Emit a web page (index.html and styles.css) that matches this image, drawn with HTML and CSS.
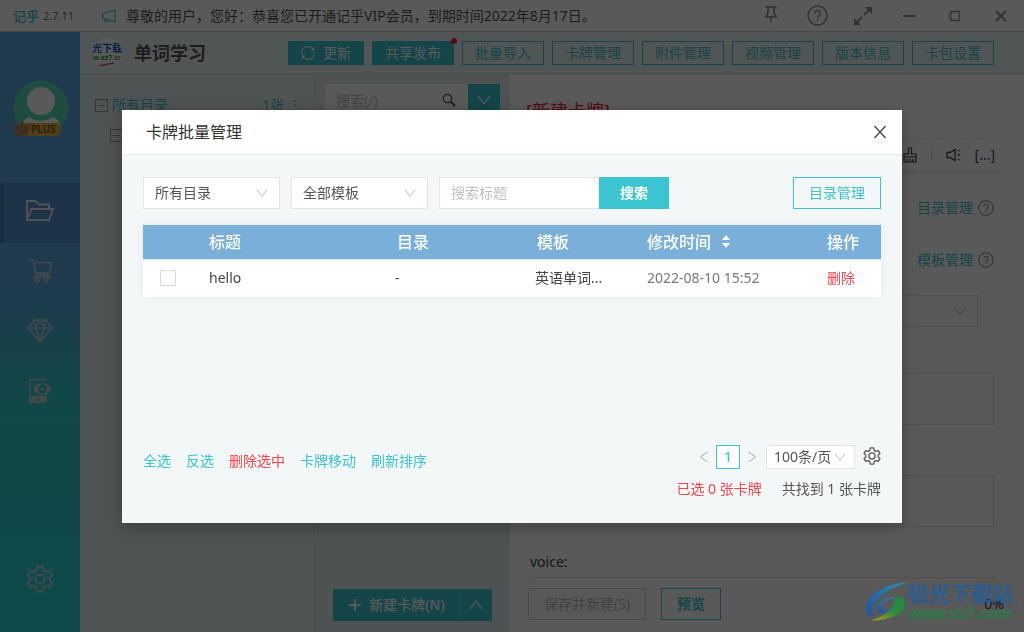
FILE: index.html
```html
<!DOCTYPE html>
<html lang="zh-CN">
<head>
<meta charset="utf-8">
<meta name="viewport" content="width=device-width, initial-scale=1">
<title>记乎</title>
<link rel="stylesheet" href="styles.css">
</head>
<body>
<svg class="defs" aria-hidden="true">
  <symbol id="chevron" viewBox="0 0 12 12"><path d="M1 2.5 6 9.5 11 2.5" fill="none" stroke="currentColor"/></symbol>
  <symbol id="help" viewBox="0 0 20 20"><g fill="none" stroke="currentColor" stroke-width="1.3"><circle cx="10" cy="10" r="9"/><path d="M7.3 8a2.7 2.7 0 1 1 4.4 2.1c-1 .8-1.7 1.100-1.700 2.400"/></g><circle cx="10" cy="14.600" r=".9" fill="currentColor"/></symbol>
  <symbol id="gear" viewBox="0 0 28 28"><g fill="none" stroke="currentColor" stroke-width="2" stroke-linejoin="round"><path d="M11.500 1.500h5l.9 3.700 2.700 1.600 3.700-1.100 2.500 4.300-2.700 2.700v2.600l2.700 2.700-2.500 4.300-3.700-1.100-2.700 1.600-.9 3.700h-5l-.9-3.700-2.700-1.600-3.700 1.100-2.500-4.300 2.700-2.700v-2.600l-2.700-2.700 2.500-4.300 3.700 1.100 2.700-1.600z"/><circle cx="14" cy="14" r="4.800"/></g></symbol>
</svg>

<div class="app">
  <header class="titlebar">
    <span class="brand">记乎</span>
    <span class="version">2.7.11</span>
    <svg class="horn" viewBox="0 0 16 14"><path d="M1.500 5 14 1v12L1.500 9zM4 9.500v3h3v-2" fill="none" stroke="currentColor" stroke-width="1.200"/></svg>
    <p class="notice">尊敬的用户，您好：恭喜您已开通记乎VIP会员，到期时间2022年8月17日。</p>
    <div class="window-tools">
      <button aria-label="置顶"><svg width="14" height="20" viewBox="0 0 14 20"><path d="M1.500 1h11M4 1v6L2 10.500M10 1v6l2 3.500M1 11h12" fill="none" stroke="currentColor" stroke-width="1.600"/><path d="M6 12h2l-1 7z" fill="currentColor"/></svg></button>
      <button aria-label="帮助"><svg width="21" height="21"><use href="#help"/></svg></button>
      <button aria-label="全屏"><svg width="20" height="20" viewBox="0 0 20 20"><path d="m11 9 6-6M9 11l-6 6" stroke="currentColor" stroke-width="2"/><path d="M12 1h7v7zM1 12v7h7z" fill="currentColor"/></svg></button>
      <button aria-label="最小化"><svg width="14" height="14"><path d="M1 7h12" stroke="currentColor" stroke-width="2"/></svg></button>
      <button aria-label="最大化"><svg width="12" height="12"><rect x="1.500" y="1.500" width="9" height="9" rx="1" fill="none" stroke="currentColor" stroke-width="1.500"/></svg></button>
      <button aria-label="关闭"><svg width="12" height="12"><path d="m1 1 10 10M11 1 1 11" stroke="currentColor" stroke-width="1.800"/></svg></button>
    </div>
  </header>

  <nav class="sidebar">
    <svg class="avatar" viewBox="0 0 56 58">
      <defs><clipPath id="face"><circle cx="29" cy="28" r="27.500"/></clipPath></defs>
      <circle cx="29" cy="28" r="27.500" fill="#58ddb7"/>
      <g clip-path="url(#face)" fill="#fff"><circle cx="29" cy="21" r="14"/><path d="M9 46c2-5 5-8 8-9 7 5 17 5 24 0 3 1 6 4 8 9v10H9z"/></g>
      <path d="M12 43h32a5 5 0 0 1 5 5v2a6 6 0 0 1-6 6H8z" fill="#e2b447"/>
      <path d="M1 43l5 3 4-5 4 5 4-3-2 12-11 1z" fill="#b5854f"/>
      <text class="plus" x="19" y="53">PLUS</text>
    </svg>
    <a class="nav-item active" href="#" aria-label="卡包"><svg width="30" height="24" viewBox="0 0 30 24"><path d="M2 21V2h8l4 3.500h10V10M2 21l4.500-11H28l-4 11z" fill="none" stroke="currentColor" stroke-width="1.800"/></svg></a>
    <a class="nav-item" href="#" aria-label="商店"><svg width="26" height="24" viewBox="0 0 26 24"><g fill="none" stroke="currentColor" stroke-width="1.500"><path d="M1 1.500h5L9 16h14M7 3.500h17.500L22.500 14H9M9 16l-2 2h18"/><circle cx="10" cy="21" r="2"/><circle cx="19" cy="21" r="2"/></g></svg></a>
    <a class="nav-item" href="#" aria-label="会员"><svg width="26" height="24" viewBox="0 0 26 24"><path d="M7 1h12l6 8-12 14L1 9zM1 9h24M7 1l2 8 4 14 4-14 2-8M8 8l5-6 5 6" fill="none" stroke="currentColor" stroke-width="1.500"/></svg></a>
    <a class="nav-item" href="#" aria-label="浏览"><svg width="24" height="26" viewBox="0 0 24 26"><path d="M18 1.500H3.500A1.500 1.500 0 0 0 2 3v17" fill="none" stroke="currentColor" stroke-width="1.500"/><path fill-rule="evenodd" fill="currentColor" d="M1 18h18v5a2 2 0 0 1-2 2H3a2 2 0 0 1-2-2zm9 2a1.500 1.500 0 1 0 0 3 1.500 1.500 0 0 0 0-3zM5 11c5-8 14-8 19 0-5 8-14 8-19 0zm9.500-4.500a4.500 4.500 0 1 0 0 9 4.500 4.500 0 0 0 0-9z"/><circle cx="14.500" cy="11" r="1.800" fill="currentColor"/></svg></a>
    <a class="nav-item settings" href="#" aria-label="设置"><svg width="28" height="28"><use href="#gear"/></svg></a>
  </nav>

  <div class="deck-bar">
    <div class="deck-logo"><b>光下载</b><i>w.xz7.cr</i><svg width="20" height="5"><path d="M1 4 17 1" stroke="#d3479b" stroke-width="1.500"/></svg></div>
    <h1>单词学习</h1>
    <div class="deck-actions">
      <button class="btn fill refresh"><svg width="14" height="14" viewBox="0 0 14 14"><path d="M1 8a6 6 0 0 1 11-4.500M13 6A6 6 0 0 1 2 10.500M12.500 1v3H10M1.500 13v-3H4" fill="none" stroke="currentColor" stroke-width="1.100"/></svg>更新</button>
      <button class="btn fill dot">共享发布</button>
      <button class="btn">批量导入</button>
      <button class="btn">卡牌管理</button>
      <button class="btn">附件管理</button>
      <button class="btn">视频管理</button>
      <button class="btn">版本信息</button>
      <button class="btn">卡包设置</button>
    </div>
  </div>

  <aside class="tree">
    <div class="tree-row"><span class="fold"></span><a href="#">所有目录</a><span class="count">1张 ⋮</span></div>
    <div class="tree-row child"><span class="fold"></span></div>
  </aside>

  <section class="cards">
    <div class="card-search">
      <input type="text" placeholder="搜索(/)" aria-label="搜索卡牌">
      <svg class="lens" viewBox="0 0 14 14"><path d="M9 9l4 4" stroke="currentColor" stroke-width="2"/><circle cx="5.500" cy="5.500" r="4.200" fill="none" stroke="currentColor" stroke-width="1.300"/></svg>
      <button class="square" aria-label="筛选"><svg width="14" height="14"><use href="#chevron"/></svg></button>
    </div>
    <div class="new-card">
      <button class="new-main"><svg width="12" height="12"><path d="M6 0v12M0 6h12" stroke="currentColor" stroke-width="2"/></svg>新建卡牌(N)</button>
      <button class="square" aria-label="更多"><svg class="up" width="14" height="14"><use href="#chevron"/></svg></button>
    </div>
  </section>

  <main class="editor">
    <div class="form">
      <h2>[新建卡牌]</h2>
      <div class="format-bar">
        <svg width="14" height="16" viewBox="0 0 14 16"><path d="M5.500 7V1h3v6H13v8H1V7zM1 10h12M4 15v-3M7 15v-3M10 15v-3" fill="none" stroke="currentColor" stroke-width="1.200"/></svg>
        <span class="divider"></span>
        <svg width="15" height="14" viewBox="0 0 15 14"><path d="M1 4.500h3L9 1.500v11L4 9.500H1zM11.500 3l2-1M11.500 7H14M11.500 11l2 1" fill="none" stroke="currentColor" stroke-width="1.300"/></svg>
        <span>[...]</span>
      </div>
      <div class="form-link"><a href="#">目录管理</a><svg width="16" height="16"><use href="#help"/></svg></div>
      <div class="form-link"><a href="#">模板管理</a><svg width="16" height="16"><use href="#help"/></svg></div>
      <div class="select template"><select aria-label="模板"><option></option></select><svg><use href="#chevron"/></svg></div>
      <textarea aria-label="正面"></textarea>
      <textarea aria-label="背面"></textarea>
      <label for="voice">voice:</label>
      <input id="voice" type="text">
    </div>
    <div class="form-actions">
      <button class="btn big" disabled>保存并新建(S)</button>
      <button class="btn big preview">预览</button>
      <span class="progress">0%</span>
    </div>
  </main>
</div>

<div class="mask">
  <div class="dialog" role="dialog" aria-modal="true" aria-labelledby="dialog-title">
    <header class="dialog-head">
      <h2 id="dialog-title">卡牌批量管理</h2>
      <button aria-label="关闭"><svg width="14" height="14"><path d="m1.500 1 11 12M12.500 1l-11 12" stroke="currentColor" stroke-width="1.300"/></svg></button>
    </header>
    <div class="dialog-body">
      <div class="filters">
        <div class="select"><select aria-label="目录"><option>所有目录</option></select><svg><use href="#chevron"/></svg></div>
        <div class="select"><select aria-label="模板"><option>全部模板</option></select><svg><use href="#chevron"/></svg></div>
        <div class="find"><input type="text" placeholder="搜索标题" aria-label="搜索标题"><button>搜索</button></div>
        <button class="btn big manage">目录管理</button>
      </div>
      <div class="table-area">
        <table>
          <colgroup><col class="c-check"><col><col class="c-dir"><col class="c-tpl"><col class="c-time"><col class="c-op"></colgroup>
          <thead><tr><th></th><th>标题</th><th>目录</th><th>模板</th><th>修改时间<svg class="sort" viewBox="0 0 8 13"><path d="M4 0l4 5H0zM4 13l4-5H0z" fill="currentColor"/></svg></th><th>操作</th></tr></thead>
          <tbody><tr><td><input type="checkbox" aria-label="选择 hello"></td><td>hello</td><td>-</td><td>英语单词...</td><td class="time">2022-08-10 15:52</td><td><a class="danger" href="#">删除</a></td></tr></tbody>
        </table>
      </div>
      <footer class="dialog-foot">
        <div class="bulk"><a href="#">全选</a><a href="#">反选</a><a class="danger" href="#">删除选中</a><a href="#">卡牌移动</a><a href="#">刷新排序</a></div>
        <div class="paging">
          <div class="pager">
            <button class="arrow" aria-label="上一页"><svg class="prev" width="12" height="12"><use href="#chevron"/></svg></button>
            <button class="page">1</button>
            <button class="arrow" aria-label="下一页"><svg class="next" width="12" height="12"><use href="#chevron"/></svg></button>
            <div class="select small"><select aria-label="每页条数"><option>100条/页</option></select><svg><use href="#chevron"/></svg></div>
            <button class="cog" aria-label="表格设置"><svg width="18" height="18"><use href="#gear"/></svg></button>
          </div>
          <p class="totals"><span class="danger">已选 0 张卡牌</span><span>共找到 1 张卡牌</span></p>
        </div>
      </footer>
    </div>
  </div>
</div>

<div class="watermark">
  <svg viewBox="0 0 44 42">
    <defs>
      <linearGradient id="wb" x1="1" y1="0" x2="0" y2="1"><stop offset="0" stop-color="#2c91b5"/><stop offset="1" stop-color="#24509a"/></linearGradient>
      <linearGradient id="wg" x1="1" y1="0" x2="0" y2="1"><stop offset="0" stop-color="#198746"/><stop offset=".5" stop-color="#318c3c"/><stop offset="1" stop-color="#b3a321"/></linearGradient>
    </defs>
    <path d="M44 1C25 1 0 13 1 28c0 6 4 8 8 8-6-10 5-26 35-35z" fill="url(#wb)"/>
    <path d="M34 17c-12-3-24 6-21 13 3 5 14 1 16-6-5 6-12 7-12 2 0-5 8-9 17-9z" fill="url(#wb)"/>
    <path d="M29 16c8-1 14 3 12 9-3 9-17 15-36 15 13-3 24-11 25-18 1-3 0-5-1-6z" fill="url(#wg)"/>
  </svg>
  <div><strong>极光下载站</strong><span>www.xz7.com</span></div>
</div>
</body>
</html>
```

FILE: styles.css
```css
* { box-sizing: border-box; }
body {
  margin: 0;
  font: 14px/20px "Noto Sans", "Noto Sans CJK SC", sans-serif;
  color: #444;
}
h1, h2, p { margin: 0; }
a { color: #3bc5d1; text-decoration: none; }
svg { flex: none; }
button, input, select, textarea { font: inherit; color: inherit; margin: 0; border-radius: 0; }
button { display: flex; align-items: center; justify-content: center; padding: 0; border: 0; background: none; }
.defs { position: absolute; width: 0; height: 0; }

.app {
  display: grid;
  grid-template: 32px 42px 1fr / 80px 235px 195px 1fr;
  height: 100vh;
  overflow: hidden;
  background: #fff;
}
.titlebar {
  grid-column: 1 / -1;
  display: flex;
  align-items: center;
  padding-left: 13px;
  border-bottom: 1px solid #d0d4d4;
}
.brand { font-size: 13px; font-weight: 500; color: #3bc5d1; }
.version { margin-left: 4px; font-size: 11px; color: #777; width: 44px; }
.horn { width: 16px; height: 14px; margin: 0 9px 0 14px; color: #3bc5d1; }
.notice { white-space: nowrap; color: #555; }
.window-tools { display: flex; margin-left: auto; color: #8c8c8c; }
.window-tools button { width: 46px; height: 30px; }

.sidebar {
  grid-row: 2 / 4;
  display: flex;
  flex-direction: column;
  align-items: center;
  padding: 48px 0 21px;
  background: linear-gradient(#5ba7df 0, #5aa5dc 250px, #31cccc 365px, #2dd2d4 100%);
}
.avatar { width: 56px; height: 58px; margin-bottom: 45px; overflow: visible; }
.plus { font: bold 10px "Noto Sans", sans-serif; fill: #8a5a2b; }
.nav-item {
  display: flex;
  align-items: center;
  justify-content: center;
  width: 100%;
  height: 60px;
  padding-bottom: 5px;
  color: #c0cdd0;
}
.nav-item.active { background: #5593d0; border-left: 4px solid #4580ac; padding-right: 4px; color: #eee; }
.settings { margin-top: auto; }

.deck-bar {
  grid-column: 2 / -1;
  display: flex;
  align-items: center;
  padding: 0 30px 0 12px;
  background: #ebf3f2;
  border-bottom: 1px solid #cfd8d8;
}
.deck-logo {
  display: flex;
  flex-direction: column;
  align-items: center;
  width: 30px;
  height: 30px;
  padding-top: 5px;
  border-radius: 50%;
  background: #fff;
  overflow: hidden;
  white-space: nowrap;
}
.deck-logo b { font-size: 10px; line-height: 11px; color: #0d5fc4; }
.deck-logo i { font: bold 7px/8px "Noto Sans", sans-serif; color: #27a33d; }
h1 { margin-left: 12px; font-size: 18px; font-weight: 700; white-space: nowrap; color: #555; }
.deck-actions { display: flex; gap: 8px; margin-left: auto; }
.btn {
  position: relative;
  width: 82px;
  height: 24px;
  border: 1px solid #3bc5d1;
  color: #3bc5d1;
  white-space: nowrap;
}
.btn.fill { background: #3bc5d1; color: #fff; }
.btn.refresh { width: 76px; gap: 8px; }
.dot::after {
  content: "";
  position: absolute;
  top: -4px;
  right: -4px;
  width: 6px;
  height: 6px;
  border-radius: 50%;
  background: #f5222d;
}
.btn.big { width: 88px; height: 32px; }

.tree { padding: 20px 12px 0 15px; background: #e4edef; border-right: 1px solid #cdd6d8; }
.tree-row { display: flex; align-items: center; height: 30px; padding-bottom: 8px; }
.tree-row.child { padding-left: 15px; }
.fold { width: 13px; height: 13px; margin: 0 4px 0 0; padding: 5px 2px; border: 1px solid #999; }
.fold::before { content: ""; display: block; height: 1px; background: #999; }
.count { margin-left: auto; color: #3bc5d1; }

.cards {
  display: flex;
  flex-direction: column;
  justify-content: space-between;
  padding: 10px 10px 11px;
  background: #e1ebed;
}
.card-search { display: flex; align-items: center; background: #fff; }
.card-search input { flex: 1; min-width: 0; height: 32px; padding: 0 11px; border: 0; background: none; }
.lens { width: 14px; height: 14px; margin-right: 12px; color: #555; }
input::placeholder { color: #bfbfbf; opacity: 1; }
.square { width: 32px; height: 32px; background: #3bc5d1; color: #fff; }
.up { transform: rotate(180deg); }
.new-card { display: flex; margin: 0 8px; }
.new-main { flex: 1; gap: 8px; height: 32px; padding-left: 2px; background: #3bc5d1; color: #fff; font-weight: 500; white-space: nowrap; border-right: 1px solid #69d3dc; }

.editor { display: flex; flex-direction: column; min-height: 0; overflow: hidden; }
.form { flex: 1; min-height: 0; overflow: hidden; display: flex; flex-direction: column; padding: 25px 30px 0 20px; }
.form h2 { margin: 0 0 15px -4px; font-size: 18px; line-height: 24px; font-weight: 400; color: #f5222d; }
.format-bar {
  display: flex;
  flex: none;
  align-items: center;
  justify-content: flex-end;
  gap: 14px;
  height: 34px;
  margin-right: -10px;
  padding-right: 9px;
  border-top: 1px dashed #ddd;
  border-bottom: 1px solid #ddd;
}
.divider { width: 1px; height: 14px; background: #ddd; }
.form-link { display: flex; flex: none; align-items: center; justify-content: flex-end; gap: 5px; height: 20px; margin-top: 26px; color: #888; }
.form-link + .form-link { margin-top: 32px; }
.select { position: relative; width: 137px; height: 32px; }
.select select {
  appearance: none;
  width: 100%;
  height: 100%;
  padding: 0 11px;
  border: 1px solid #e3e6e8;
  background: #fff;
  color: #555;
}
.select svg { position: absolute; top: 10px; right: 12px; width: 12px; height: 12px; color: #bfbfbf; pointer-events: none; }
.select.template { flex: none; width: auto; margin: 25px 16px 0 0; }
textarea { display: block; flex: none; height: 52px; margin: 46px 0 4px; border: 1px solid #e3e3e3; background: #fff; resize: none; }
.form label { flex: none; margin-top: 21px; }
.form > input { flex: none; height: 52px; margin-top: 5px; border: 1px solid #e3e3e3; background: #fff; }
.form-actions { display: flex; align-items: center; flex: none; gap: 15px; height: 50px; padding: 0 6px 6px 18px; }
.form-actions .btn { width: 118px; }
.form-actions .btn:disabled { border-color: #d0d0d0; color: #bbb; background: #fbfbfb; }
.form-actions .btn.preview { width: 60px; font-weight: 700; }
.progress { margin-left: auto; width: 48px; height: 48px; border-radius: 50%; line-height: 48px; text-align: center; background: #f8f8f8; }

.mask {
  position: fixed;
  inset: 0;
  display: flex;
  align-items: center;
  justify-content: center;
  background: rgba(0, 0, 0, .65);
}
.dialog { width: 780px; max-width: 100%; background: #f3f7f8; box-shadow: 0 4px 16px rgba(0, 0, 0, .3); }
.dialog-head {
  display: flex;
  align-items: center;
  justify-content: space-between;
  height: 45px;
  padding: 0 15px 0 24px;
  background: #fff;
  border-bottom: 1px solid #e6e8ea;
}
.dialog-head h2 { font-size: 16px; font-weight: 400; color: #333; }
.dialog-body { padding: 22px 21px 24px; }
.filters { display: flex; gap: 11px; }
.find { display: flex; width: 230px; }
.find input { flex: 1; min-width: 0; height: 32px; padding: 0 11px; border: 1px solid #e3e6e8; border-right: 0; background: #fff; }
.find button { width: 70px; height: 32px; background: #3bc5d1; color: #fff; font-weight: 700; }
.manage { margin-left: auto; }

.table-area { min-height: 220px; margin-top: 16px; }
table { width: 100%; table-layout: fixed; border-collapse: collapse; background: #fff; box-shadow: 0 0 10px rgba(0, 0, 0, .06); }
.c-check { width: 50px; }
.c-dir { width: 140px; }
.c-tpl { width: 110px; }
.c-time { width: 180px; }
.c-op { width: 70px; }
th { height: 35px; padding: 0 0 0 16px; background: #79afd8; color: #fff; font-size: 16px; font-weight: 500; text-align: left; }
td { height: 37px; padding: 0 0 0 14px; border-top: 1px solid #e8e8e8; white-space: nowrap; }
td:first-child { padding-left: 17px; }
td:nth-child(2), td:nth-child(5), td:last-child { padding-left: 16px; }
.time { color: #777; }
.sort { width: 8px; height: 13px; margin-left: 11px; }
input[type="checkbox"] { appearance: none; display: block; width: 16px; height: 16px; border: 1px solid #d9d9d9; border-radius: 2px; background: #fff; }
.danger { color: #f5454a; }

.dialog-foot { display: flex; justify-content: space-between; }
.bulk { display: flex; gap: 15px; padding-top: 6px; }
.pager { display: flex; align-items: center; justify-content: flex-end; }
.arrow { width: 24px; height: 24px; color: #aaa; }
.prev { transform: rotate(90deg); }
.next { transform: rotate(-90deg); }
.page { width: 24px; height: 24px; border: 1px solid #3bc5d1; background: #fff; color: #3bc5d1; font-weight: 500; }
.select.small { width: 89px; height: 24px; margin: 0 8px 0 2px; }
.select.small select { padding: 0 7px; }
.select.small svg { top: 6px; right: 9px; }
.cog { padding-bottom: 2px; color: #555; }
.totals { display: flex; justify-content: flex-end; gap: 20px; margin-top: 10px; color: #555; }
.totals .danger { color: #f5454a; }

.watermark { position: fixed; right: 11px; bottom: 9px; display: flex; align-items: center; pointer-events: none; }
.watermark svg { width: 43px; height: 42px; }
.watermark div { display: flex; flex-direction: column; white-space: nowrap; }
.watermark strong { font-size: 21px; line-height: 24px; color: #285c95; }
.watermark span { font: bold 16px/18px "Liberation Sans", sans-serif; color: #267f45; }
```
